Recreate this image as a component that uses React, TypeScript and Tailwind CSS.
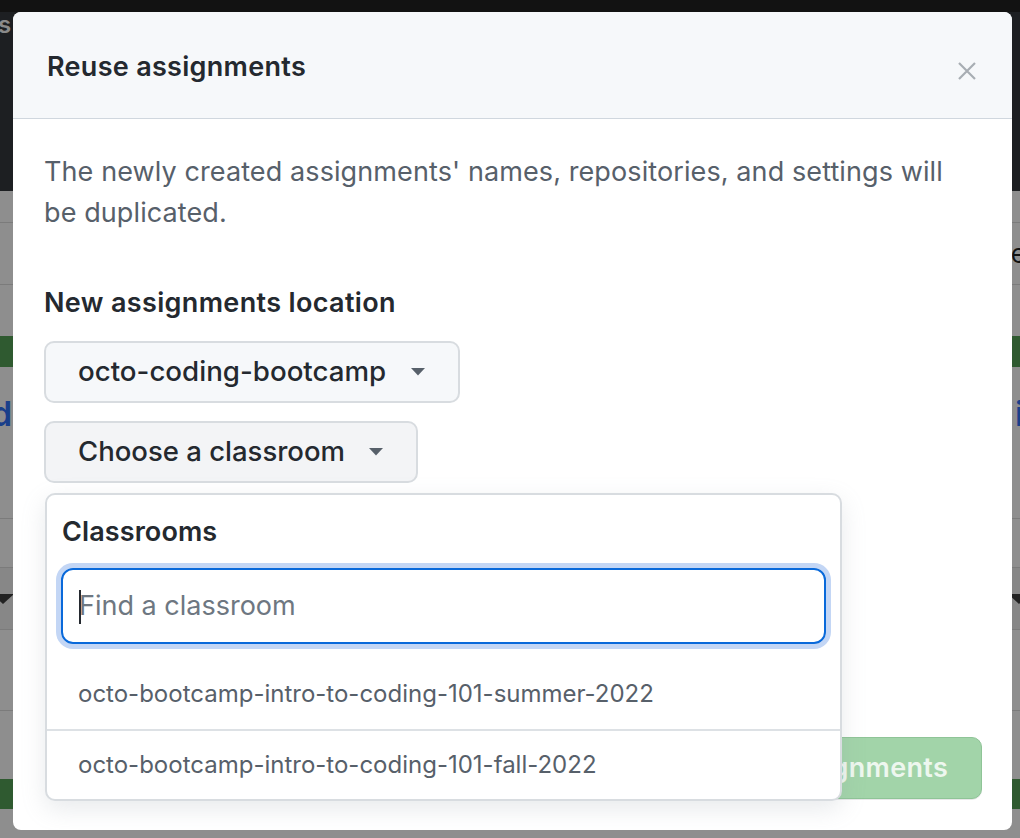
import React from "react";

const font = { fontFamily: "Inter, 'Noto Sans', sans-serif" } as React.CSSProperties;

function Caret() {
  return (
    <svg width="16" height="8" viewBox="0 0 16 8" className="shrink-0">
      <path d="M1 0h14L8 7.5z" fill="#57606a" />
    </svg>
  );
}

function Background() {
  return (
    <div className="flex flex-col w-full h-full">
      <div className="h-[191px] bg-[#1d1f22] flex flex-col">
        <div className="h-[12px] bg-[#121212]" />
        <div className="text-[#8a8a8a] text-[24px] font-semibold leading-none pt-[1px] pl-0 -ml-[2px]">s</div>
      </div>
      <div className="h-[32px] border-b border-[#7b7b7b]" />
      <div className="h-[62px] border-b border-[#7b7b7b] flex items-center justify-end">
        <span className="text-[#111] text-[26px] leading-none mr-[-6px]">e</span>
      </div>
      <div className="h-[51px]" />
      <div className="h-[31px] bg-[#2f5a30]" />
      <div className="h-[152px] border-b border-[#7b7b7b] flex items-start justify-between pt-[30px]">
        <span className="text-[#1a3f8a] text-[34px] font-semibold leading-none -ml-[9px]">d</span>
        <span className="text-[#1a3f8a] text-[34px] font-semibold leading-none -mr-[4px]">i</span>
      </div>
      <div className="h-[49px] border-b border-[#7b7b7b]" />
      <div className="h-[62px] bg-[#878787] border-b border-[#7b7b7b] flex items-center justify-between">
        <svg width="22" height="10" viewBox="0 0 22 10" className="-ml-[8px]"><path d="M0 0h22L11 10z" fill="#222" /></svg>
        <svg width="22" height="10" viewBox="0 0 22 10" className="-mr-[10px]"><path d="M0 0h22L11 10z" fill="#222" /></svg>
      </div>
      <div className="h-[81px] border-b border-[#7b7b7b]" />
      <div className="h-[68px]" />
      <div className="h-[30px] bg-[#2f5a30]" />
      <div className="flex-1" />
    </div>
  );
}

export default function App() {
  return (
    <div className="relative w-[1020px] h-[838px] overflow-hidden bg-[#8e8e8e]" style={font}>
      <Background />
      <div className="absolute left-[13px] top-[12px] w-[999px] h-[818px] bg-white rounded-[8px] flex flex-col overflow-hidden">
        <div className="h-[107px] shrink-0 bg-[#f6f8fa] border-b border-[#d0d7de] flex items-center justify-between pl-[34px] pr-[36px]">
          <h1 className="text-[27px] tracking-[0.3px] font-semibold text-[#24292f] leading-none mt-[2px]">Reuse assignments</h1>
          <svg width="18" height="18" viewBox="0 0 18 18" className="mt-[12px]">
            <path d="M1 1L17 17M17 1L1 17" stroke="#a8adb3" strokeWidth="2.2" />
          </svg>
        </div>
        <div className="flex-1 flex flex-col pl-[31px] pr-[30px]">
          <p className="mt-[32px] text-[27px] tracking-[0.1px] leading-[41px] text-[#57606a] w-[920px]">
            The newly created assignments' names, repositories, and settings will be duplicated.
          </p>
          <h2 className="mt-[55px] text-[27px] tracking-[0.35px] leading-[30px] font-semibold text-[#24292f]">New assignments location</h2>
          <div className="mt-[23px] flex flex-col items-start gap-[18px]">
            <button className="h-[62px] px-[32px] flex items-center gap-[24px] bg-[#f6f8fa] border-2 border-[#d8dce0] rounded-[10px] text-[27.7px] font-medium text-[#24292f]">
              <span>octo-coding-bootcamp</span>
              <Caret />
            </button>
            <button className="h-[62px] px-[32px] flex items-center gap-[23px] bg-[#f3f4f6] border-2 border-[#d8dce0] rounded-[10px] text-[27.5px] font-medium text-[#24292f]">
              <span>Choose a classroom</span>
              <Caret />
            </button>
          </div>
          <div className="flex-1" />
          <div className="flex justify-end mb-[31px]">
            <div className="h-[62px] w-[327px] flex items-center justify-center bg-[#a2d4a9] border border-[#8fc497] rounded-[10px] text-[27px] tracking-[0.3px] font-semibold text-[#eef7ef] shadow-[0_1px_0_rgba(27,31,36,0.1)]">
              Reuse assignments
            </div>
          </div>
        </div>
        <div className="absolute left-[32px] top-[481px] w-[797px] bg-white border-2 border-[#d8dce0] rounded-[10px] shadow-[0_8px_24px_rgba(140,149,159,0.2)] flex flex-col">
          <div className="pl-[15px] pt-[22px] text-[27px] tracking-[0.1px] font-semibold leading-[30px] text-[#24292f]">Classrooms</div>
          <div className="mt-[21px] mx-[14px] h-[76px] rounded-[12px] border-2 border-[#0969da] ring-[5px] ring-[#c3d6f5] flex items-center pl-[16px] relative">
            <span className="absolute left-[16px] top-[20px] w-[2px] h-[34px] bg-[#24292f]" />
            <span className="text-[27px] text-[#6e7781]">Find a classroom</span>
          </div>
          <div className="mt-[15px] h-[70px] flex items-center pl-[31px] text-[24px] text-[#57606a]">
            octo-bootcamp-intro-to-coding-101-summer-2022
          </div>
          <div className="h-[70px] border-t-2 border-[#dde1e5] flex items-center pl-[31px] text-[24px] text-[#57606a]">
            octo-bootcamp-intro-to-coding-101-fall-2022
          </div>
        </div>
      </div>
    </div>
  );
}
